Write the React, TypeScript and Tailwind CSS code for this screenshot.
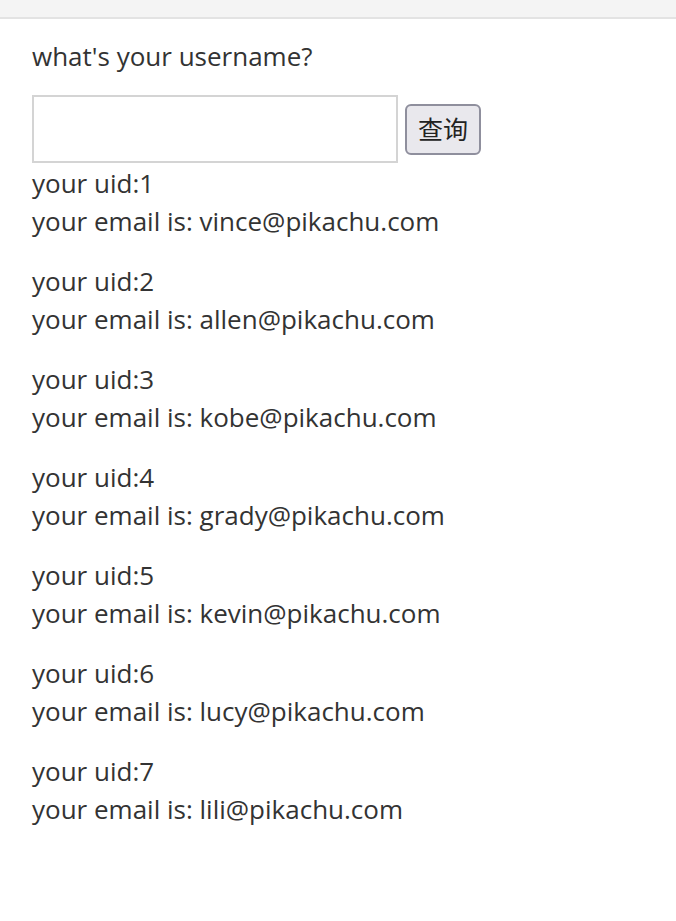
const users = [
  { uid: 1, email: 'vince@pikachu.com' },
  { uid: 2, email: 'allen@pikachu.com' },
  { uid: 3, email: 'kobe@pikachu.com' },
  { uid: 4, email: 'grady@pikachu.com' },
  { uid: 5, email: 'kevin@pikachu.com' },
  { uid: 6, email: 'lucy@pikachu.com' },
  { uid: 7, email: 'lili@pikachu.com' },
]

export default function App() {
  return (
    <div className="min-h-screen bg-white font-['Open_Sans','Noto_Sans_CJK_SC',sans-serif] text-[26px] text-[#333]">
      <div className="h-[19px] border-b-2 border-[#e3e3e3] bg-[#f4f4f4]" />
      <div className="px-[32px] pt-[18px]">
        <p className="leading-[38px]">what's your username?</p>
        <div className="mt-[20px] flex items-center gap-[7px]">
          <input
            type="text"
            className="h-[68px] w-[366px] border-2 border-[#d4d4d4] bg-white outline-none"
          />
          <button className="h-[51px] w-[76px] rounded-[6px] border-2 border-[#8f8f9d] bg-[#e9e8ed] text-[25px] leading-none text-[#222]">
            查询
          </button>
        </div>
        <div className="mt-[1px] flex flex-col gap-[22px]">
          {users.map((u) => (
            <div key={u.uid} className="leading-[38px]">
              <p>your uid:{u.uid}</p>
              <p>your email is: {u.email}</p>
            </div>
          ))}
        </div>
      </div>
    </div>
  )
}
